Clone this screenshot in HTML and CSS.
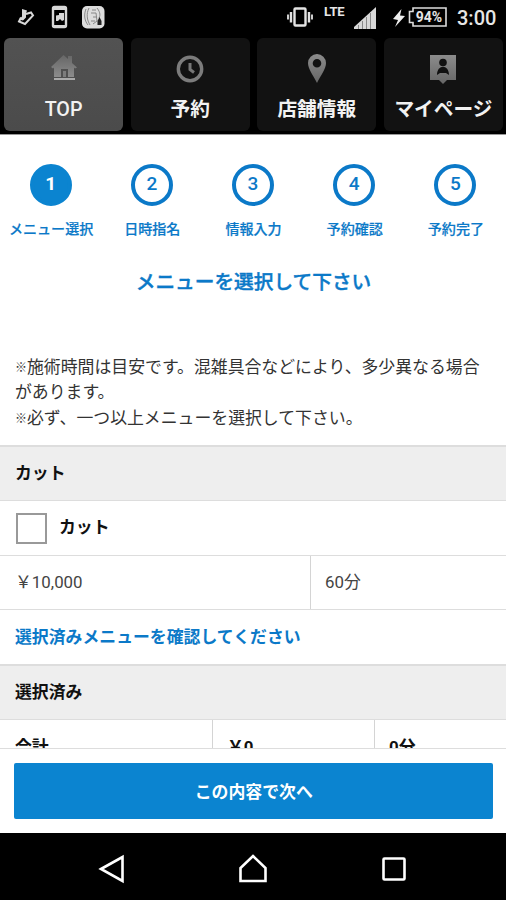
FILE: index.html
```html
<!DOCTYPE html>
<html lang="ja">
<head>
<meta charset="utf-8">
<meta name="viewport" content="width=device-width, initial-scale=1">
<title>メニュー選択</title>
<link rel="stylesheet" href="styles.css">
</head>
<body>
<div class="screen">
  <div class="status">
    <svg class="status-left" width="110" height="35" viewBox="0 0 110 35">
      <g fill="none" stroke="#d8d8d8">
        <path d="M26 14l5-1.500 2 3-8 8.500-6-2.500 2-4" stroke-width="2"/>
        <rect x="53" y="7" width="13" height="20" rx="1.500" stroke-width="2.400"/>
      </g>
      <path fill="#d8d8d8" d="M22 9l5 1.500-1 3v4l-3 3-4-1 3-3zM56 15.500l3-.5V13h5v7l-2 1-2-2-2 2h-2zM53 25h13v2H53zM53 7h13v3H53z"/>
      <rect x="82" y="6" width="22.500" height="22.500" rx="5" fill="#ddd"/>
      <g fill="none" stroke="#888" stroke-width="1"><path d="M86 9c-2 5-2 11 2 16M89 8c-3 6-2 12 1 17M92 10h4M91 13h5l1 8-4 3M97 8c4 5 3 8 2 10M93 17h3M91 21h4"/></g>
      <path fill="#222" d="M99.500 17l2 4v4h-4v-4z"/>
    </svg>
    <div class="status-right">
      <svg width="28" height="22" viewBox="0 0 28 22"><g fill="none" stroke="#e4e4e4"><rect x="8.500" y="2.500" width="11" height="17" rx="1" stroke-width="2.400"/><path d="M5 6v10.500M23 6v10.500" stroke-width="2.400"/><path d="M2 8.500v5M26 8.500v5" stroke-width="1.800"/></g></svg>
      <span class="lte">LTE</span>
      <svg class="signal" width="22" height="22" viewBox="0 0 22 22"><path fill="#d8d8d8" d="M0 22V20L22 0v22z"/><path stroke="#888" d="M4.500 18v4M8.500 14v8M12.500 10v12M16.500 6v16"/></svg>
      <svg class="bolt" width="12" height="18" viewBox="0 0 12 18"><path fill="#eee" d="M8.500 0L0 10l5 1-3 7L12 7 7 6.500z"/></svg>
      <div class="battery">
        <svg width="39" height="20" viewBox="0 0 39 20"><path d="M5 1h33v18H5v-3.500H1.500v-11H5z" fill="none" stroke="#ddd" stroke-width="1.600"/></svg>
        <span>94%</span>
      </div>
      <span class="clock">3:00</span>
    </div>
  </div>

  <nav class="tabs">
    <div class="tab tab-active">
      <svg width="30" height="30" viewBox="0 0 30 30"><defs><linearGradient id="g" x1="0" y1="0" x2="0" y2="1"><stop offset="0" stop-color="#666"/><stop offset="1" stop-color="#8c8c8c"/></linearGradient><linearGradient id="d" x1="0" y1="0" x2="0" y2="1"><stop offset="0" stop-color="#8c8c8c"/><stop offset="1" stop-color="#666"/></linearGradient></defs><path fill="url(#g)" d="M2 13L14.500 1l4.500 4V2h4v7l5 4.500-2 1-1-1V23h-6v-8h-7v8H5v-9.500l-1 1z"/><path fill="#7c7c7c" d="M14 17h3v6h-3z"/><path fill="#aaa" d="M5 24h21v2H5z"/></svg>
      <span>TOP</span>
    </div>
    <div class="tab">
      <svg width="30" height="30" viewBox="0 0 30 30"><circle cx="15" cy="15" r="11.700" fill="none" stroke="#7c7c7c" stroke-width="3.400"/><path d="M15 9v6.500l4 3" fill="none" stroke="#777" stroke-width="3"/></svg>
      <span>予約</span>
    </div>
    <div class="tab">
      <svg width="30" height="30" viewBox="0 0 30 30"><path fill="url(#d)" fill-rule="evenodd" d="M15 0a9 9 0 0 1 9 9c0 6-5 12-9 20C11 21 6 15 6 9a9 9 0 0 1 9-9zm0 5a4.300 4.300 0 1 0 0 8.600A4.300 4.300 0 0 0 15 5z"/></svg>
      <span>店舗情報</span>
    </div>
    <div class="tab">
      <svg width="30" height="30" viewBox="0 0 30 30"><path fill="url(#d)" d="M2 1h26v25h-9l-4 4-4-4H2z"/><circle cx="15" cy="8.500" r="3.800" fill="#111"/><path fill="#111" d="M9 21c0-11 12-11 12 0l-3-2h-6z"/></svg>
      <span>マイページ</span>
    </div>
  </nav>

  <main class="content">
    <ol class="steps">
      <li class="current"><b>1</b><span>メニュー選択</span></li>
      <li><b>2</b><span>日時指名</span></li>
      <li><b>3</b><span>情報入力</span></li>
      <li><b>4</b><span>予約確認</span></li>
      <li><b>5</b><span>予約完了</span></li>
    </ol>
    <h1>メニューを選択して下さい</h1>
    <p class="note"><span class="mark">※</span>施術時間は目安です。混雑具合などにより、多少異なる場合があります。<br><span class="mark">※</span>必ず、一つ以上メニューを選択して下さい。</p>
    <h2 class="bar">カット</h2>
    <label class="option"><i class="checkbox"></i><span>カット</span></label>
    <div class="price-row"><span>￥10,000</span><span>60分</span></div>
    <p class="confirm">選択済みメニューを確認してください</p>
    <h2 class="bar">選択済み</h2>
    <div class="total-row"><span>合計</span><span>￥0</span><span>0分</span></div>
  </main>

  <footer class="action"><button type="button">この内容で次へ</button></footer>

  <div class="system-nav">
    <svg width="30" height="30" viewBox="0 0 30 30"><path d="M4 15L25.500 3v24z"/></svg>
    <svg width="30" height="30" viewBox="0 0 30 30"><path d="M2.500 27V14L15 2l12.500 12v13z"/></svg>
    <svg width="30" height="30" viewBox="0 0 30 30"><rect x="4.500" y="4.500" width="21" height="21" rx="1"/></svg>
  </div>
</div>
</body>
</html>
```
FILE: styles.css
```css
* { box-sizing: border-box; }

body {
  margin: 0;
  background: #000;
  color: #111;
  font: 16.87px/25.300px Roboto, "Noto Sans CJK JP", sans-serif;
}

.screen {
  width: 506px;
  height: 900px;
  display: flex;
  flex-direction: column;
  overflow: hidden;
}

.status {
  height: 38px;
  flex: none;
  display: flex;
  justify-content: space-between;
  color: #e6e6e6;
}

.status-right {
  display: flex;
  align-items: flex-start;
  height: 35px;
  padding: 6px 10px 0 0;
}

.lte {
  margin: -2px 0 0 10px;
  font-size: 13px;
  line-height: 16px;
  font-weight: 700;
  letter-spacing: -0.2px;
  width: 21px;
}

.signal { margin: 1px 0 0 9px; }
.bolt { margin: 3px 0 0 17px; }

.battery {
  display: grid;
  width: 39px;
  height: 20px;
  margin: 1px 0 0 3px;
  font-size: 14px;
  line-height: 20px;
  font-weight: 700;
  text-align: center;
}

.battery > * { grid-area: 1 / 1; }
.battery span { padding-left: 3px; }

.clock {
  margin-left: 10px;
  width: 39px;
  font-size: 20px;
  line-height: 25px;
  font-weight: 500;
}

.tabs {
  height: 96px;
  flex: none;
  display: grid;
  grid-template-columns: repeat(4, 1fr);
  gap: 7.500px;
  padding: 0 3px 3px 4px;
}

.tab {
  display: flex;
  flex-direction: column;
  align-items: center;
  padding-top: 16px;
  border-radius: 6px;
  background: #121212;
  color: #f2f2f2;
  font-size: 19.700px;
  line-height: 28px;
  font-weight: 500;
  white-space: nowrap;
}

.tab span { margin-top: 12px; }
.tab:not(.tab-active) { font-weight: 700; }
.tab-active { background: linear-gradient(#525252, #4b4b4b); }

.content {
  height: 614px;
  flex: none;
  overflow: hidden;
  background: #fff;
  border-top: 1px solid #999;
}

.steps {
  display: grid;
  grid-template-columns: repeat(5, 1fr);
  margin: 0;
  padding: 29px 0 0;
  list-style: none;
  color: #0b79c8;
}

.steps li {
  display: flex;
  flex-direction: column;
  align-items: center;
}

.steps b {
  width: 42px;
  height: 42px;
  border: 4px solid #0b79c8;
  border-radius: 50%;
  font-size: 19px;
  line-height: 32px;
  font-weight: 500;
  text-align: center;
}

.steps .current b {
  background: #0b84d0;
  border-color: #0b84d0;
  color: #fff;
  font-weight: 700;
}

.steps span {
  margin-top: 13px;
  padding-left: 1px;
  font-size: 14.060px;
  line-height: 20px;
  font-weight: 500;
  -webkit-text-stroke: 0.2px;
  white-space: nowrap;
}

h1 {
  margin: 30px 0 0;
  padding-left: 1px;
  font-size: 19.680px;
  line-height: 28px;
  font-weight: 500;
  -webkit-text-stroke: 0.4px;
  color: #0b79c8;
  text-align: center;
}

.note {
  margin: 58px 0 0;
  padding: 0 10px 0 15px;
  height: 90px;
  color: #333;
  font-weight: 400;
}

.mark {
  font-size: 12px;
  line-height: 1;
  vertical-align: 1px;
}

.bar {
  height: 56px;
  margin: 0;
  padding: 0 15px;
  border: solid #ddd;
  border-width: 2px 0 1px;
  background: #eee;
  font-size: 16.870px;
  line-height: 52px;
  font-weight: 700;
}

.option {
  height: 54px;
  display: flex;
  align-items: center;
  padding-left: 16px;
  font-weight: 700;
}

.checkbox {
  width: 31px;
  height: 31px;
  margin-right: 12px;
  border: 2px solid #999;
}

.price-row {
  height: 55px;
  display: grid;
  grid-template-columns: 310px 1fr;
  border: solid #ddd;
  border-width: 1px 0;
  line-height: 53px;
  color: #444;
}

.price-row span { padding-left: 15px; }
.price-row span + span { padding-left: 14px; }
.price-row span + span,
.total-row span + span { border-left: 1px solid #d4d4d4; }

.confirm {
  height: 54px;
  margin: 0;
  padding-left: 15px;
  line-height: 54px;
  font-weight: 700;
  color: #0b79c8;
}

.total-row {
  height: 55px;
  display: grid;
  grid-template-columns: 212px 162px 1fr;
  line-height: 54px;
  font-weight: 700;
}

.total-row span { padding-left: 15px; }
.total-row span + span { padding-left: 14px; }

.action {
  height: 85px;
  flex: none;
  padding: 14px 13.500px 0 14px;
  border-top: 1px solid #ddd;
  background: #fff;
}

.action button {
  display: block;
  width: 100%;
  height: 56px;
  padding: 3px 0 0 1px;
  border: 0;
  border-radius: 2px;
  background: #0b84d0;
  color: #fff;
  font: inherit;
  font-weight: 700;
}

.system-nav {
  flex: 1;
  display: flex;
  justify-content: center;
  gap: 111px;
  padding-top: 21px;
}

.system-nav svg { fill: none; stroke: #fff; stroke-width: 2.600; }
```
